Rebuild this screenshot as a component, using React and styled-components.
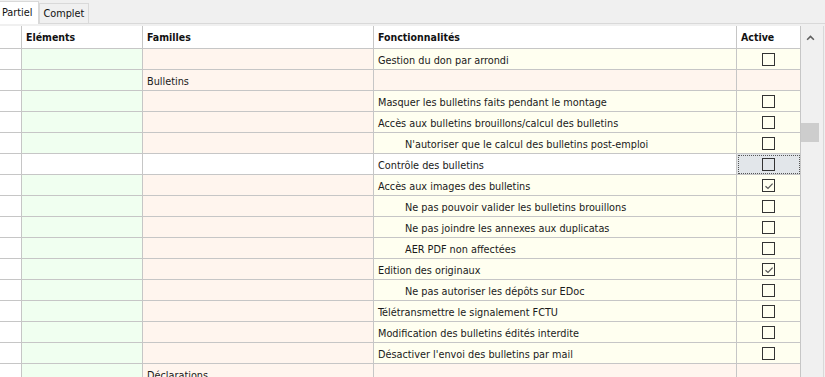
import React from "react";
import styled, { createGlobalStyle } from "styled-components";

const GlobalStyle = createGlobalStyle`
  html, body {
    margin: 0;
    padding: 0;
    background: #f0f0f0;
  }
  body {
    font-family: "DejaVu Sans Condensed", "DejaVu Sans", Tahoma, sans-serif;
    font-size: 10.8px;
    color: #1a1a1a;
  }
`;

const colors = {
  line: "#c6c6c6",
  green: "#f0fff0",
  peach: "#fff5ee",
  ivory: "#fffff0",
  white: "#ffffff",
};

const rows = [
  { fct: "Gestion du don par arrondi", checked: false },
  { family: "Bulletins" },
  { fct: "Masquer les bulletins faits pendant le montage", checked: false },
  { fct: "Accès aux bulletins brouillons/calcul des bulletins", checked: false },
  { fct: "N'autoriser que le calcul des bulletins post-emploi", checked: false, sub: true },
  { fct: "Contrôle des bulletins", checked: false, selected: true },
  { fct: "Accès aux images des bulletins", checked: true },
  { fct: "Ne pas pouvoir valider les bulletins brouillons", checked: false, sub: true },
  { fct: "Ne pas joindre les annexes aux duplicatas", checked: false, sub: true },
  { fct: "AER PDF non affectées", checked: false, sub: true },
  { fct: "Edition des originaux", checked: true },
  { fct: "Ne pas autoriser les dépôts sur EDoc", checked: false, sub: true },
  { fct: "Télétransmettre le signalement FCTU", checked: false },
  { fct: "Modification des bulletins édités interdite", checked: false },
  { fct: "Désactiver l'envoi des bulletins par mail", checked: false },
  { family: "Déclarations" },
];

export default function App() {
  return (
    <>
      <GlobalStyle />
      <Page>
        <TabBar>
          <Tab active>Partiel</Tab>
          <Tab>Complet</Tab>
        </TabBar>
        <Panel>
          <GridWrap>
            <Grid>
              <HeadCell />
              <HeadCell>Eléments</HeadCell>
              <HeadCell>Familles</HeadCell>
              <HeadCell>Fonctionnalités</HeadCell>
              <HeadCell>Active</HeadCell>
              {rows.map((r, i) => {
                const isFamily = !!r.family;
                const sel = r.selected;
                const fctBg = sel ? colors.white : isFamily ? colors.peach : colors.ivory;
                return (
                  <React.Fragment key={i}>
                    <Cell bg={colors.white} />
                    <Cell bg={sel ? colors.white : colors.green} />
                    <Cell bg={sel ? colors.white : colors.peach}>{r.family}</Cell>
                    <Cell bg={fctBg} indent={r.sub}>{r.fct}</Cell>
                    <CheckCell bg={fctBg} focused={sel}>
                      {!isFamily && <Check checked={r.checked} />}
                    </CheckCell>
                  </React.Fragment>
                );
              })}
            </Grid>
          </GridWrap>
          <Scrollbar>
            <ArrowUp viewBox="0 0 8 6">
              <path d="M1 5 L4 2 L7 5" fill="none" stroke="#5f5f5f" strokeWidth="1.4" />
            </ArrowUp>
            <Thumb />
          </Scrollbar>
        </Panel>
      </Page>
    </>
  );
}

function Check({ checked }) {
  return (
    <Box>
      {checked && (
        <svg width="10" height="10" viewBox="0 0 10 10">
          <path d="M1.5 5.2 L4 7.4 L8.6 2.6" fill="none" stroke="#555" strokeWidth="1.2" />
        </svg>
      )}
    </Box>
  );
}

const Page = styled.div`
  width: 825px;
  height: 377px;
  overflow: hidden;
  display: flex;
  flex-direction: column;
  background: #f0f0f0;
`;

const TabBar = styled.div`
  display: flex;
  align-items: flex-end;
  height: 23px;
  margin-left: -5px;
`;

const Tab = styled.div`
  box-sizing: border-box;
  height: ${p => (p.active ? "23px" : "20px")};
  padding: ${p => (p.active ? "4px 5px 0 6px" : "3px 4px 0 4px")};
  margin-right: 0;
  background: ${p => (p.active ? "#ffffff" : "#f0f0f0")};
  border: 1px solid #d9d9d9;
  border-bottom: none;
  font-size: 10.8px;
  color: #111;
  margin-bottom: ${p => (p.active ? "-1px" : "0")};
  position: relative;
  z-index: ${p => (p.active ? 1 : 0)};
`;

const Panel = styled.div`
  flex: 1;
  display: flex;
  border-top: 1px solid #d9d9d9;
  padding-top: 2px;
  min-height: 0;
`;

const GridWrap = styled.div`
  width: 801px;
  overflow: hidden;
`;

const Grid = styled.div`
  display: grid;
  grid-template-columns: 22px 121px 231px 363px 64px;
  grid-auto-rows: 21px;
  grid-template-rows: 23px;
`;

const HeadCell = styled.div`
  box-sizing: border-box;
  background: #ffffff;
  border-right: 1px solid ${colors.line};
  border-bottom: 1px solid ${colors.line};
  display: flex;
  align-items: center;
  padding-left: 4px;
  font-weight: bold;
  font-size: 10.5px;
  color: #111;
  white-space: nowrap;
`;

const Cell = styled.div`
  box-sizing: border-box;
  background: ${p => p.bg};
  border-right: 1px solid ${colors.line};
  border-bottom: 1px solid ${colors.line};
  display: flex;
  align-items: center;
  padding-top: 2px;
  padding-left: ${p => (p.indent ? "31px" : "4px")};
  white-space: nowrap;
  overflow: hidden;
`;

const CheckCell = styled.div`
  box-sizing: border-box;
  background: ${p => (p.focused ? "#e2e6ea" : p.bg)};
  border-right: 1px solid ${colors.line};
  border-bottom: 1px solid ${colors.line};
  outline: ${p => (p.focused ? "1px dotted #555" : "none")};
  outline-offset: -2px;
  display: flex;
  align-items: center;
  justify-content: center;
  padding-top: 1px;
`;

const Box = styled.div`
  box-sizing: border-box;
  width: 13px;
  height: 13px;
  border: 1px solid #333;
  background: transparent;
  display: flex;
  align-items: center;
  justify-content: center;
`;

const Scrollbar = styled.div`
  position: relative;
  width: 22px;
  border-right: 1px solid #d9d9d9;
  background: #f0f0f0;
`;

const ArrowUp = styled.svg`
  position: absolute;
  left: 5px;
  top: 8px;
  width: 9px;
  height: 7px;
`;

const Thumb = styled.div`
  position: absolute;
  left: 0;
  top: 97px;
  width: 18px;
  height: 19px;
  background: #cdcdcd;
`;
